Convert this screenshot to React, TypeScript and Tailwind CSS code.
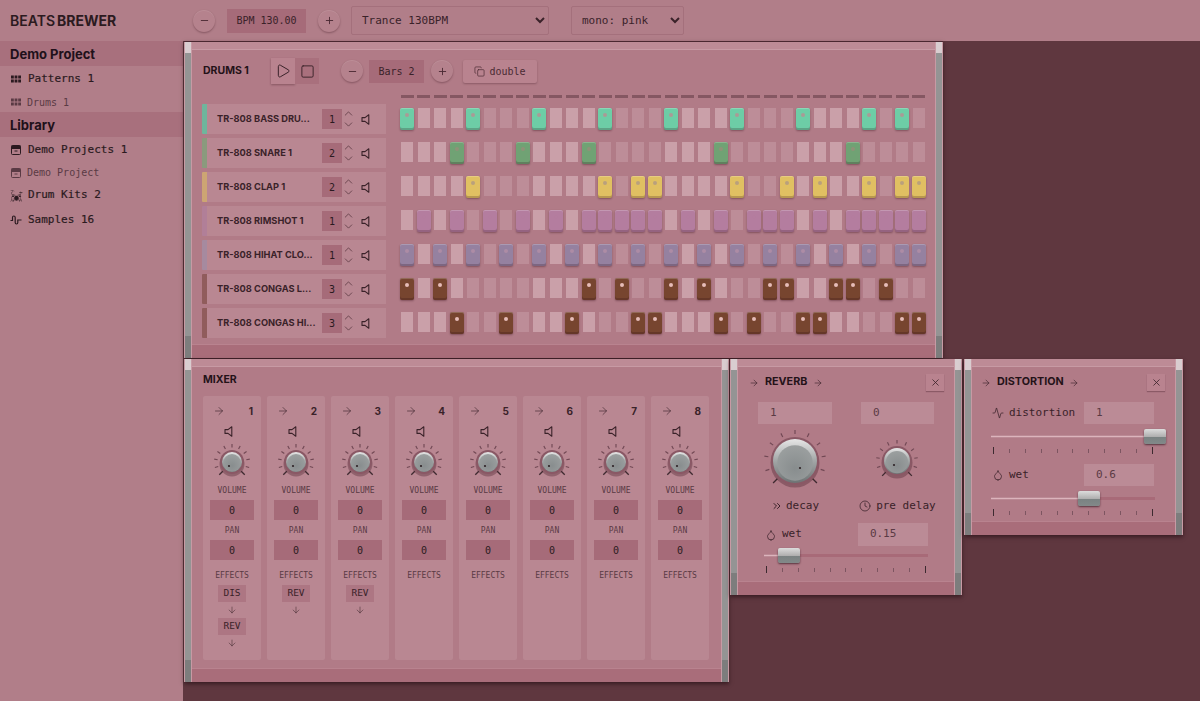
import React from 'react';
import {
  Activity,
  ArrowDown,
  ArrowRight,
  ChevronDown,
  ChevronUp,
  ChevronsRight,
  Clock,
  Copy,
  Droplet,
  Minus,
  Play,
  Plus,
  Square,
  X,
} from 'lucide-react';
import { GiDrumKit } from 'react-icons/gi';

const heading = "font-['Inter',sans-serif]";

const tracks = [
  { name: 'TR-808 BASS DRU...', pitch: 1, bar: 'bg-[#6fb59c]', step: 'bg-[#6dcda6]', dot: 'bg-[#a99a96]', on: [0, 4, 8, 12, 16, 20, 24, 28, 30] },
  { name: 'TR-808 SNARE 1', pitch: 2, bar: 'bg-[#8a9a7d]', step: 'bg-[#70a274]', dot: 'bg-[#8f9278]', on: [3, 7, 11, 19, 27] },
  { name: 'TR-808 CLAP 1', pitch: 2, bar: 'bg-[#cda573]', step: 'bg-[#e0c062]', dot: 'bg-[#b9a07c]', on: [4, 12, 14, 15, 20, 23, 25, 28, 30, 31] },
  { name: 'TR-808 RIMSHOT 1', pitch: 1, bar: 'bg-[#b17f98]', step: 'bg-[#b47d9f]', dot: 'bg-[#b47d9f]', on: [1, 3, 5, 7, 9, 11, 12, 13, 14, 15, 17, 19, 21, 22, 23, 25, 27, 28, 29, 30, 31] },
  { name: 'TR-808 HIHAT CLO...', pitch: 1, bar: 'bg-[#a68a9f]', step: 'bg-[#9581a0]', dot: 'bg-[#ad8ca5]', on: [0, 2, 4, 6, 8, 10, 12, 14, 16, 18, 20, 22, 24, 26, 28, 30, 31] },
  { name: 'TR-808 CONGAS L...', pitch: 3, bar: 'bg-[#905c5c]', step: 'bg-[#77452f]', dot: 'bg-[#e6bcb8]', on: [0, 2, 11, 13, 16, 18, 22, 23, 26, 27, 29] },
  { name: 'TR-808 CONGAS HI...', pitch: 3, bar: 'bg-[#905c5c]', step: 'bg-[#77452f]', dot: 'bg-[#e6bcb8]', on: [3, 6, 10, 14, 15, 19, 21, 24, 25, 30, 31] },
];

const channels = [
  { id: 1, effects: ['DIS', 'REV'] },
  { id: 2, effects: ['REV'] },
  { id: 3, effects: ['REV'] },
  { id: 4, effects: [] },
  { id: 5, effects: [] },
  { id: 6, effects: [] },
  { id: 7, effects: [] },
  { id: 8, effects: [] },
];

const RoundButton = ({ children }: { children: React.ReactNode }) => (
  <button className="w-[22px] h-[22px] shrink-0 rounded-full bg-[#b5828d] shadow-[0_1px_2px_rgba(70,30,40,0.4),inset_0_1px_0_rgba(255,255,255,0.1)] flex items-center justify-center text-[#4a2a33]">
    {children}
  </button>
);

const Speaker = ({ className }: { className: string }) => (
  <svg width="9" height="11" viewBox="0 0 9 11" fill="none" stroke="currentColor" strokeWidth="1.1" strokeLinejoin="round" className={`shrink-0 ${className}`}>
    <path d="M7.8 0.8V10.2L4 7.4H1V3.6H4Z" />
  </svg>
);

const Strip = () => (
  <div className="w-[8px] shrink-0 flex flex-col border-x border-[#c79aa4] bg-[#949494]">
    <div className="h-[11px] bg-[#d9cdd0]" />
    <div className="flex-1" />
    <div className="h-[22px] bg-[#7d7d7d]" />
  </div>
);

// floating window with grey side rails, lighter top band, darker bottom band
const Panel = ({ className, children }: { className: string; children: React.ReactNode }) => (
  <div className={`flex shrink-0 bg-[#b17b87] shadow-[0_2px_4px_rgba(30,10,15,0.6)] ${className}`}>
    <Strip />
    <div className="flex-1 min-w-0 flex flex-col">
      <div className="h-[8px] shrink-0 bg-[#bd8b96] border-b border-[#c79aa4]" />
      <div className="flex-1 min-h-0">{children}</div>
      <div className="h-[14px] shrink-0 bg-[#a96d7a] border-t border-[#b9838f]" />
    </div>
    <Strip />
  </div>
);

const Knob = ({ radius, dotX, dotY }: { radius: number; dotX: number; dotY: number }) => {
  const big = radius > 20;
  const outer = radius + (big ? 7 : 6);
  const size = outer * 2 + 2;
  const c = size / 2;
  const capR = radius * 0.74;
  const ticks = Array.from({ length: 11 }, (_, i) => -225 + i * 27);
  return (
    <svg width={size} height={size} className="block">
      <defs>
        <linearGradient id="knobBody" x1="0" y1="0" x2="0" y2="1">
          <stop offset="0" stopColor="#e6e6e6" />
          <stop offset="0.5" stopColor="#a2a6a6" />
          <stop offset="1" stopColor="#6d7374" />
        </linearGradient>
        <radialGradient id="knobCap" cx="0.5" cy="0.65" r="0.7">
          <stop offset="0" stopColor="#888d8e" />
          <stop offset="1" stopColor="#9da1a1" />
        </radialGradient>
      </defs>
      {ticks.map((angle, i) => {
        const end = i === 0 || i === 10;
        const a = (angle * Math.PI) / 180;
        const from = end ? radius + 1 : outer - (big ? 4 : 3.5);
        return (
          <line
            key={angle}
            x1={c + Math.cos(a) * from}
            y1={c + Math.sin(a) * from}
            x2={c + Math.cos(a) * outer}
            y2={c + Math.sin(a) * outer}
            stroke={end ? '#3f2a30' : '#714854'}
            strokeWidth={end ? 1.3 : 1.15}
          />
        );
      })}
      <circle cx={c} cy={c + 2} r={radius + 0.5} fill="rgba(70,30,40,0.35)" />
      <circle cx={c} cy={c} r={radius} fill="#8a5865" />
      <circle cx={c} cy={c} r={radius - 2} fill="url(#knobBody)" />
      <circle cx={c} cy={c + radius * 0.08} r={capR} fill="url(#knobCap)" />
      <circle cx={c + dotX} cy={c + dotY} r={1.1} fill="#2d2226" />
    </svg>
  );
};

const Slider = ({ value }: { value: number }) => {
  const thumbLeft = value * 164 - 11;
  return (
    <div className="w-[164px]">
      <div className="relative h-[15px] flex items-center">
        <div className="h-[3px] bg-[#dcb4bc] border-y border-[#bb8a95]" style={{ width: value * 164 }} />
        <div className="h-[3px] flex-1 bg-[#a86a78]" />
        <div
          className="absolute top-0 w-[22px] h-[15px] rounded-[2px] shadow-[0_1px_2px_rgba(50,20,30,0.7)] bg-[linear-gradient(#dcdcdc_0%,#b0b0b0_50%,#7a8282_55%,#828989_100%)]"
          style={{ left: thumbLeft }}
        />
      </div>
      <div className="mt-[3px] h-[7px] flex items-center justify-between px-[2px]">
        {Array.from({ length: 11 }, (_, i) =>
          i === 0 || i === 10 ? (
            <div key={i} className="w-px h-[7px] bg-[#3d2a30]" />
          ) : (
            <div key={i} className="w-px h-[4px] bg-[#7d5561]" />
          ),
        )}
      </div>
    </div>
  );
};

const FieldBox = ({ value, className }: { value: string; className: string }) => (
  <div className={`h-[22px] pl-[12px] flex items-center bg-[#bb8b96] text-[11px] text-[#5a3a44] ${className}`}>{value}</div>
);

const EffectHeader = ({ title, textWidth }: { title: string; textWidth: string }) => (
  <div className="mt-[7px] -ml-[5px] h-[17px] pr-[10px] flex items-center">
    <ArrowRight size={10} strokeWidth={1.5} className="shrink-0 text-[#3a2229]" />
    <span className={`${heading} ${textWidth} ml-[6px] text-[10.75px] font-bold text-[#241218]`}>{title}</span>
    <ArrowRight size={10} strokeWidth={1.5} className="shrink-0 ml-[5px] text-[#3a2229]" />
    <button className="ml-auto w-[18px] h-[17px] bg-[#b9838f] shadow-[0_1px_1px_rgba(70,30,40,0.35)] flex items-center justify-center text-[#3a2229]">
      <X size={11} strokeWidth={1.75} />
    </button>
  </div>
);

const GridIcon = () => (
  <svg width="10" height="8" viewBox="0 0 10 8" fill="currentColor" className="shrink-0">
    <rect x="0" y="0.5" width="2.8" height="3" />
    <rect x="3.6" y="0.5" width="2.8" height="3" />
    <rect x="7.2" y="0.5" width="2.8" height="3" />
    <rect x="0" y="4.5" width="2.8" height="3" />
    <rect x="3.6" y="4.5" width="2.8" height="3" />
    <rect x="7.2" y="4.5" width="2.8" height="3" />
  </svg>
);

const ArchiveIcon = () => (
  <svg width="10" height="10" viewBox="0 0 10 10" className="shrink-0">
    <rect x="0.5" y="0.5" width="9" height="9" rx="1" fill="none" stroke="currentColor" />
    <rect x="0.5" y="0.5" width="9" height="3.5" fill="currentColor" />
    <line x1="3.5" y1="6" x2="6.5" y2="6" stroke="currentColor" />
  </svg>
);

const WaveIcon = () => (
  <svg width="12" height="10" viewBox="0 0 12 10" fill="none" stroke="currentColor" strokeWidth="1.2" className="shrink-0">
    <path d="M0.5 5.5H2.5V2.5Q2.5 1 3.8 1T5.2 2.5V7.5Q5.2 9 6.5 9T7.8 7.5V5H11.5" />
  </svg>
);

const Sidebar = () => (
  <aside className="w-[183px] shrink-0 text-[#2b1a20]">
    <div className={`${heading} h-[25px] pl-[10px] pt-[2px] flex items-center bg-[#a8707d] text-[13px] font-bold text-[#20101a]`}>Demo Project</div>
    <div className="h-[26px] pl-[11px] flex items-center gap-[7px] text-[11px] [-webkit-text-stroke:0.2px]">
      <GridIcon />
      Patterns 1
    </div>
    <div className="h-[20px] pl-[11px] flex items-center gap-[6px] text-[10px] text-[#5a3a44]">
      <GridIcon />
      Drums 1
    </div>
    <div className={`${heading} h-[25px] pl-[10px] pt-[2px] flex items-center bg-[#a8707d] text-[13px] font-bold text-[#20101a]`}>Library</div>
    <div className="h-[26px] pl-[11px] flex items-center gap-[7px] text-[11px] [-webkit-text-stroke:0.2px]">
      <ArchiveIcon />
      Demo Projects 1
    </div>
    <div className="h-[19px] pl-[11px] flex items-center gap-[6px] text-[10px] text-[#5a3a44]">
      <ArchiveIcon />
      Demo Project
    </div>
    <div className="h-[26px] pl-[10px] flex items-center gap-[5px] text-[11px] [-webkit-text-stroke:0.2px]">
      <GiDrumKit size={13} className="shrink-0" />
      Drum Kits 2
    </div>
    <div className="h-[24px] pl-[10px] flex items-center gap-[6px] text-[11px] [-webkit-text-stroke:0.2px]">
      <WaveIcon />
      Samples 16
    </div>
  </aside>
);

const TopBar = () => (
  <header className="h-[41px] shrink-0 flex items-center text-[#3a2229]">
    <div className={`${heading} w-[183px] shrink-0 pl-[10px] text-[14px] text-[#2b1a20]`}>
      <span className="font-semibold">BEATS</span>
      <span className="font-bold ml-[2px]">BREWER</span>
    </div>
    <div className="ml-[10px]">
      <RoundButton>
        <Minus size={11} />
      </RoundButton>
    </div>
    <div className="ml-[12px] w-[79px] h-[24px] bg-[#a66b79] flex items-center justify-center text-[10px] text-[#3a2229]">BPM 130.00</div>
    <div className="ml-[12px]">
      <RoundButton>
        <Plus size={11} />
      </RoundButton>
    </div>
    <select defaultValue="trance" className="ml-[11px] w-[198px] h-[29px] pl-[6px] bg-[#b17e89] border border-[#a4707c] rounded-[2px] text-[11px] text-[#3a2229]">
      <option value="trance">Trance 130BPM</option>
    </select>
    <select defaultValue="pink" className="ml-[22px] w-[113px] h-[29px] pl-[6px] bg-[#b17e89] border border-[#a4707c] rounded-[2px] text-[11px] text-[#3a2229]">
      <option value="pink">mono: pink</option>
    </select>
  </header>
);

const DrumRow = ({ track }: { track: (typeof tracks)[number] }) => (
  <div className="h-[30px] flex items-center">
    <div className={`w-[5px] h-full rounded-l-[1px] ${track.bar}`} />
    <div className="w-[179px] h-full pl-[10px] flex items-center bg-[#b98792]">
      <span className={`${heading} w-[96px] whitespace-nowrap text-[9.25px] font-bold text-[#3a2229]`}>{track.name}</span>
      <div className="ml-[9px] w-[20px] h-[20px] bg-[#a66b79] flex items-center justify-center text-[10px] text-[#2b1a20]">{track.pitch}</div>
      <div className="w-[12px] flex flex-col items-center text-[#4a2a33]">
        <ChevronUp size={13} strokeWidth={1.25} className="-my-px" />
        <ChevronDown size={13} strokeWidth={1.25} className="-my-px" />
      </div>
      <Speaker className="ml-[7px] text-[#3a2229]" />
    </div>
    <div className="ml-[12.75px] flex">
      {Array.from({ length: 32 }, (_, i) => {
        const light = Math.floor(i / 4) % 2 === 0;
        return (
          <div key={i} className="w-[16.5px] flex justify-center">
            {track.on.includes(i) ? (
              <div className={`w-[14px] h-[22px] rounded-[2px] flex justify-center pt-[5px] shadow-[inset_0_-2px_0_rgba(40,10,20,0.22),inset_0_1px_0_rgba(255,255,255,0.2),0_1px_2px_rgba(60,20,30,0.4)] ${track.step}`}>
                <div className={`w-[4px] h-[4px] rounded-full ${track.dot}`} />
              </div>
            ) : (
              <div className={`w-[12px] h-[20px] ${light ? 'bg-[#caa0a9]' : 'bg-[#bd8d98]'}`} />
            )}
          </div>
        );
      })}
    </div>
  </div>
);

const DrumsPanel = () => (
  <Panel className="w-[759px] h-[317px] border-t border-[#4a2730]">
    <div className="pl-[10px] pt-[8px]">
      <div className="h-[26px] pl-px flex items-center text-[#3a2229]">
        <span className={`${heading} w-[68px] text-[10.5px] font-bold text-[#241218]`}>DRUMS 1</span>
        <div className="flex">
          <button className="w-[24px] h-[26px] bg-[#b9838f] shadow-[0_1px_2px_rgba(70,30,40,0.4)] flex items-center justify-center">
            <Play size={16} strokeWidth={1.5} />
          </button>
          <button className="w-[24px] h-[26px] bg-[#a9707d] flex items-center justify-center">
            <Square size={15} strokeWidth={1.5} />
          </button>
        </div>
        <div className="ml-[22px]">
          <RoundButton>
            <Minus size={11} />
          </RoundButton>
        </div>
        <div className="ml-[6px] w-[55px] h-[23px] bg-[#a66b79] flex items-center justify-center text-[10px]">Bars 2</div>
        <div className="ml-[7px]">
          <RoundButton>
            <Plus size={11} />
          </RoundButton>
        </div>
        <button className="ml-[10px] w-[74px] h-[23px] bg-[#b9838f] rounded-[2px] shadow-[0_1px_2px_rgba(70,30,40,0.35)] flex items-center justify-center gap-[4px] text-[10px] text-[#4a2a33]">
          <Copy size={11} strokeWidth={1.5} />
          double
        </button>
      </div>
      <div className="mt-[11px] ml-[196.75px] flex">
        {Array.from({ length: 32 }, (_, i) => (
          <div key={i} className="w-[16.5px] flex justify-center">
            <div className="w-[13px] h-[3px] bg-[#855762]" />
          </div>
        ))}
      </div>
      <div className="mt-[6px] flex flex-col gap-[4px]">
        {tracks.map((track) => (
          <DrumRow key={track.name} track={track} />
        ))}
      </div>
    </div>
  </Panel>
);

const ChannelStrip = ({ channel }: { channel: (typeof channels)[number] }) => (
  <div className="w-[58px] h-[264px] rounded-[2px] bg-[#b98792] flex flex-col items-center">
    <div className="w-full mt-[9px] h-[12px] pl-[10px] pr-[8px] flex items-center justify-between text-[#3a2229]">
      <ArrowRight size={12} strokeWidth={1.25} />
      <span className={`${heading} text-[10px] font-bold`}>{channel.id}</span>
    </div>
    <Speaker className="mt-[9px] -ml-[7px] text-[#3a2229]" />
    <div className="mt-[6px]">
      <Knob radius={12} dotX={-3} dotY={4} />
    </div>
    <div className="mt-[5px] h-[10px] text-[8px] leading-[10px] text-[#5a3a44]">VOLUME</div>
    <div className="mt-[4px] w-[44px] h-[20px] bg-[#a66b79] flex items-center justify-center text-[10px] text-[#2b1a20]">0</div>
    <div className="mt-[6px] h-[10px] text-[8px] leading-[10px] text-[#5a3a44]">PAN</div>
    <div className="mt-[4px] w-[44px] h-[20px] bg-[#a66b79] flex items-center justify-center text-[10px] text-[#2b1a20]">0</div>
    <div className="mt-[11px] h-[10px] text-[8px] leading-[10px] text-[#5a3a44]">EFFECTS</div>
    {channel.effects.map((effect, i) => (
      <div key={effect} className={`flex flex-col items-center ${i === 0 ? 'mt-[4px]' : 'mt-[3px]'}`}>
        <div className="w-[28px] h-[17px] bg-[#ad7683] flex items-center justify-center text-[9.5px] text-[#3a2229]">{effect}</div>
        <ArrowDown size={10} strokeWidth={1.25} className="mt-[3px] text-[#3a2229]" />
      </div>
    ))}
  </div>
);

const MixerPanel = () => (
  <Panel className="w-[545px] h-[323px]">
    <div className="pl-[11px]">
      <div className={`${heading} h-[29px] pb-[4px] flex items-center text-[10.5px] font-bold text-[#241218]`}>MIXER</div>
      <div className="flex gap-[6px]">
        {channels.map((channel) => (
          <ChannelStrip key={channel.id} channel={channel} />
        ))}
      </div>
    </div>
  </Panel>
);

const ReverbPanel = () => (
  <Panel className="w-[232px] h-[236px]">
    <div className="pl-[16px]">
      <EffectHeader title="REVERB" textWidth="w-[43px]" />
      <div className="mt-[11px] ml-[4px] flex">
        <FieldBox value="1" className="w-[74px]" />
        <FieldBox value="0" className="ml-[29px] w-[73px]" />
      </div>
      <div className="-ml-[16px] mt-[5px] h-[64px] flex items-center">
        <div className="w-[114px] flex justify-center">
          <Knob radius={24} dotX={5} dotY={7} />
        </div>
        <div className="w-[90px] flex justify-center">
          <Knob radius={15} dotX={-3} dotY={4} />
        </div>
      </div>
      <div className="mt-[6px] h-[14px] flex items-center text-[11px] text-[#3a2229]">
        <ChevronsRight size={12} strokeWidth={2} className="ml-[17px]" />
        <span className="ml-[3px]">decay</span>
        <Clock size={12} strokeWidth={1.5} className="ml-[40px]" />
        <span className="ml-[5px]">pre delay</span>
      </div>
      <div className="mt-[10px] h-[23px] flex items-center text-[11px] text-[#3a2229]">
        <Droplet size={12} strokeWidth={1.5} className="ml-[11px]" />
        <span className="ml-[5px]">wet</span>
        <FieldBox value="0.15" className="ml-[56px] w-[70px] h-[23px]" />
      </div>
      <div className="mt-[2px] ml-[10px]">
        <Slider value={0.15} />
      </div>
    </div>
  </Panel>
);

const DistortionPanel = () => (
  <Panel className="ml-[1px] w-[219px] h-[176px]">
    <div className="pl-[14px]">
      <EffectHeader title="DISTORTION" textWidth="w-[67px]" />
      <div className="mt-[11px] h-[22px] flex items-center text-[11px] text-[#3a2229]">
        <Activity size={12} strokeWidth={1.5} className="ml-[6px]" />
        <span className="ml-[5px] w-[75px]">distortion</span>
        <FieldBox value="1" className="w-[70px]" />
      </div>
      <div className="mt-[5px] ml-[5px]">
        <Slider value={1} />
      </div>
      <div className="mt-[10px] h-[22px] flex items-center text-[11px] text-[#3a2229]">
        <Droplet size={12} strokeWidth={1.5} className="ml-[6px]" />
        <span className="ml-[5px] w-[75px]">wet</span>
        <FieldBox value="0.6" className="w-[70px]" />
      </div>
      <div className="mt-[5px] ml-[5px]">
        <Slider value={0.6} />
      </div>
    </div>
  </Panel>
);

export default function App() {
  return (
    <div className="w-full h-screen overflow-hidden flex flex-col bg-[#b17e89] font-['DejaVu_Sans_Mono',monospace]">
      <TopBar />
      <div className="flex-1 min-h-0 flex">
        <Sidebar />
        <main className="flex-1 min-w-0 pl-px bg-[#5f373f]">
          <DrumsPanel />
          <div className="mt-px flex items-start gap-px">
            <MixerPanel />
            <ReverbPanel />
            <DistortionPanel />
          </div>
        </main>
      </div>
    </div>
  );
}
